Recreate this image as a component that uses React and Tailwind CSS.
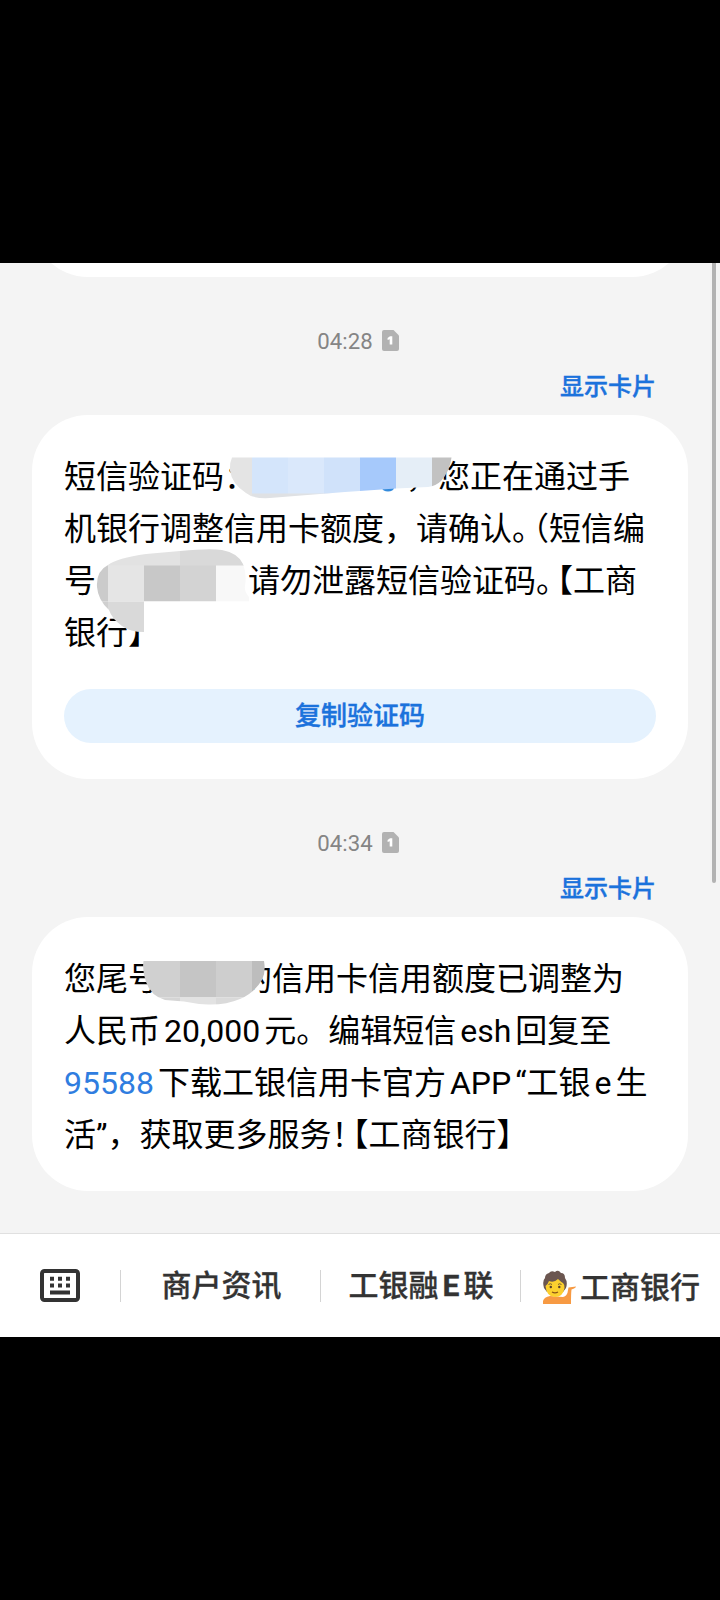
const textFont = "font-['Roboto','Noto_Sans_CJK_SC',sans-serif]";

function SimIcon() {
  return (
    <svg width="17" height="21" viewBox="0 0 17 21" className="relative -top-px">
      <path d="M2 0h9.5L17 5.5V19a2 2 0 0 1-2 2H2a2 2 0 0 1-2-2V2a2 2 0 0 1 2-2Z" fill="#b2b2b2" />
      <path d="M8 6.2h2.3V14.6H7.7V9.2L5.6 10V7.9Z" fill="#fff" />
    </svg>
  );
}

function Timestamp({ time }) {
  return (
    <div className="flex h-[28px] items-center justify-center gap-[9px] pr-1 text-[22.2px] leading-[28px] text-[#858585]">
      <span>{time}</span>
      <SimIcon />
    </div>
  );
}

function ShowCard() {
  return (
    <div className="pr-16 text-right text-[24px] leading-[30px] font-medium text-[#1b72dc] [-webkit-text-stroke:0.4px]">
      显示卡片
    </div>
  );
}

// Half-width full-width punctuation followed by an opening bracket
function TightPair({ mark, open }) {
  return (
    <span className="[font-feature-settings:'halt']">
      {mark}<span className="ml-[5px]">{open}</span>
    </span>
  );
}

function KeyboardIcon() {
  return (
    <svg width="40" height="33" viewBox="0 0 40 33" fill="#333">
      <rect x="2" y="2" width="36" height="29" rx="2.5" fill="none" stroke="#333" strokeWidth="4" />
      <path d="M10 7.800h4v4h-4zM18 7.800h4v4h-4zM26 7.800h4v4h-4zM10 14.500h4v4h-4zM18 14.500h4v4h-4zM26 14.500h4v4h-4zM10 21.500h20v4H10z" />
    </svg>
  );
}

function PersonEmoji() {
  return (
    <svg width="34" height="35" viewBox="0 0 34 35">
      <path d="M0 34V31Q1 27 7 26L20 27Q24.500 26 25 20L25.500 17.500L33 16.500Q33 18 28.500 19.500Q28 23 28 34Z" fill="#f79a43" />
      <path d="M1 18Q-1 11 2 8Q2 4 6 3Q8 0 12 2Q15-1 18 3Q22 3 22 8Q25 12 23 18L20 22H4Z" fill="#6b5650" />
      <path d="M2.500 16Q5 14 6 11Q11 13 15 9Q18 12 20 13Q22 15 21.500 18Q20 27 12 27Q3.500 27 2.500 16Z" fill="#fcd02f" />
      <path d="M5.500 14.500Q7.500 13 9 14.500M15 14.500Q16.500 13 18.500 14.500" fill="none" stroke="#6b5030" strokeWidth="0.9" />
      <circle cx="7.800" cy="17" r="1.200" fill="#58402b" />
      <circle cx="16.300" cy="17" r="1.200" fill="#58402b" />
      <path d="M9 22Q12 23.800 15 22" fill="none" stroke="#8a5518" strokeWidth="1.200" />
    </svg>
  );
}

// Pixelated smears that hide the private digits
function CodeMask() {
  return (
    <svg className="absolute top-[30px] left-[190px]" width="240" height="60" viewBox="222 445 240 60">
      <clipPath id="codeMask">
        <path d="M232 457.500H451.500Q450 471 441 481Q436 486 428 487L396 488.500L345 492L270 498Q253 499 246 493Q232 484 230 471Q229.500 463 232 457.500Z" />
      </clipPath>
      <ellipse cx="388" cy="488" rx="6" ry="3.500" fill="#338bdc" />
      <g clipPath="url(#codeMask)">
        <path d="M222 457h30v48h-30z" fill="#e4e4e4" />
        <path d="M252 457h36v37h-36z" fill="#d4e5fb" />
        <path d="M288 457h36v37h-36z" fill="#dae8fb" />
        <path d="M324 457h36v37h-36z" fill="#d0e2fa" />
        <path d="M360 457h36v37h-36z" fill="#a6c9fb" />
        <path d="M396 457h36v37h-36z" fill="#e5eef7" />
        <path d="M432 457h30v37h-30z" fill="#c2c2c2" />
        <path d="M252 493.500h100v10H252z" fill="#dfe1e4" />
      </g>
    </svg>
  );
}

function SerialMask() {
  return (
    <svg className="absolute top-[130px] left-[58px]" width="170" height="95" viewBox="90 545 170 95">
      <clipPath id="serialMask">
        <path d="M97 587Q96 571 108 565Q117 558 146 554L180 551Q210 548 222 550Q238 553 243 564Q247 574 245 586Q244 591 249 597V601.500H144V632Q130 632 122 626Q112 619 109 610Q98 600 97 587Z" />
      </clipPath>
      <g clipPath="url(#serialMask)">
        <path d="M90 545h90v21H90z" fill="#e2e2e2" />
        <path d="M180 545h80v21h-80z" fill="#d9d9d9" />
        <path d="M90 565.500h18v36H90z" fill="#cbcbcb" />
        <path d="M108 565.500h36v36h-36z" fill="#e5e5e5" />
        <path d="M144 565.500h36v36h-36z" fill="#c8c8c8" />
        <path d="M180 565.500h36v36h-36z" fill="#d3d3d3" />
        <path d="M216 565.500h36v36h-36z" fill="#f8f8f8" />
        <path d="M90 601.500h18v36H90z" fill="#cfcfcf" />
        <path d="M108 601.500h36v36h-36z" fill="#d9d9d9" />
      </g>
    </svg>
  );
}

function TailMask() {
  return (
    <svg className="absolute top-[38px] left-[108px]" width="130" height="55" viewBox="140 955 130 55">
      <clipPath id="tailMask">
        <path d="M143.500 961H264Q266 972 262 980Q254 993 240 999Q226 1005 208 1004.500Q196 1004 184 1001.500L165 1000Q151 996 146 982Q142 971 143.500 961Z" />
      </clipPath>
      <g clipPath="url(#tailMask)">
        <path d="M140 961h40v36.500h-40z" fill="#d0d0d0" />
        <path d="M180 961h36v36.500h-36z" fill="#c5c5c5" />
        <path d="M216 961h36v36.500h-36z" fill="#cecece" />
        <path d="M252 961h18v36.500h-18z" fill="#bdbdbd" />
        <path d="M140 997.500h40v10h-40z" fill="#d5d5d5" />
        <path d="M180 997.500h36v10h-36z" fill="#e2e2e2" />
        <path d="M216 997.500h50v10h-50z" fill="#dadada" />
      </g>
    </svg>
  );
}

function Divider() {
  return <div className="h-8 w-px bg-[#d4d4d4]" />;
}

export default function App() {
  return (
    <div className={`h-[1600px] w-[720px] overflow-hidden bg-black pt-[263px] ${textFont}`}>
      <div className="relative flex h-[1074px] flex-col bg-[#f4f4f4]">
        <div className="h-[14px] overflow-hidden">
          <div className="mx-8 -mt-[186px] h-[200px] rounded-[56px] bg-white" />
        </div>

        <div className="mt-[50px]"><Timestamp time="04:28" /></div>
        <div className="mt-[17px]"><ShowCard /></div>

        <div className="relative mx-8 mt-[13px] h-[364px] rounded-[56px] bg-white px-8 pt-9">
          <div className="text-[32px] leading-[52px] whitespace-nowrap text-black">
            <div className="flex"><span className="w-[342px]">短信验证码：</span><span>，您正在通过手</span></div>
            <div>机银行调整信用卡额度，请确认<TightPair mark="。" open="（" />短信编</div>
            <div className="flex"><span className="w-[184px]">号</span><span>请勿泄露短信验证码<TightPair mark="。" open="【" />工商</span></div>
            <div>银行】</div>
          </div>
          <CodeMask />
          <SerialMask />
          <div className="mt-[30px] flex h-[54px] items-center justify-center rounded-[27px] bg-[#e5f2fe] text-[26px] font-medium text-[#1b72dc] [-webkit-text-stroke:0.4px]">
            复制验证码
          </div>
        </div>

        <div className="mt-[50px]"><Timestamp time="04:34" /></div>
        <div className="mt-[17px]"><ShowCard /></div>

        <div className="relative mx-8 mt-[13px] h-[274px] rounded-[56px] bg-white px-8 pt-9">
          <div className="text-[32px] leading-[52px] whitespace-nowrap text-black">
            <div className="flex"><span className="w-[176px]">您尾号</span><span>的信用卡信用额度已调整为</span></div>
            <div>人民币<span className="mx-1">20,000</span>元。编辑短信<span className="mx-1">esh</span>回复至</div>
            <div><span className="mr-1 text-[#2f7de0]">95588</span>下载工银信用卡官方<span className="mx-1">APP</span>“工银<span className="mx-1">e</span>生</div>
            <div>活”，获取更多服务<TightPair mark="！" open="【" />工商银行】</div>
          </div>
          <TailMask />
        </div>

        <div className="mt-auto flex h-[104px] items-center border-t border-[#e0e0e0] bg-white text-[30px] font-medium text-[#333] [-webkit-text-stroke:0.3px]">
          <div className="flex w-[120px] justify-center"><KeyboardIcon /></div>
          <Divider />
          <div className="w-[199px] pl-0.5 text-center">商户资讯</div>
          <Divider />
          <div className="w-[199px] pl-px text-center">工银融<span className="mx-1 font-bold">E</span>联</div>
          <Divider />
          <div className="flex items-center pt-[3px] pl-[22px]"><PersonEmoji /><span className="ml-[3px]">工商银行</span></div>
        </div>

        <div className="absolute top-0 right-1 h-[620px] w-1 rounded-b-full bg-[#b3b3b3]" />
      </div>
    </div>
  );
}
